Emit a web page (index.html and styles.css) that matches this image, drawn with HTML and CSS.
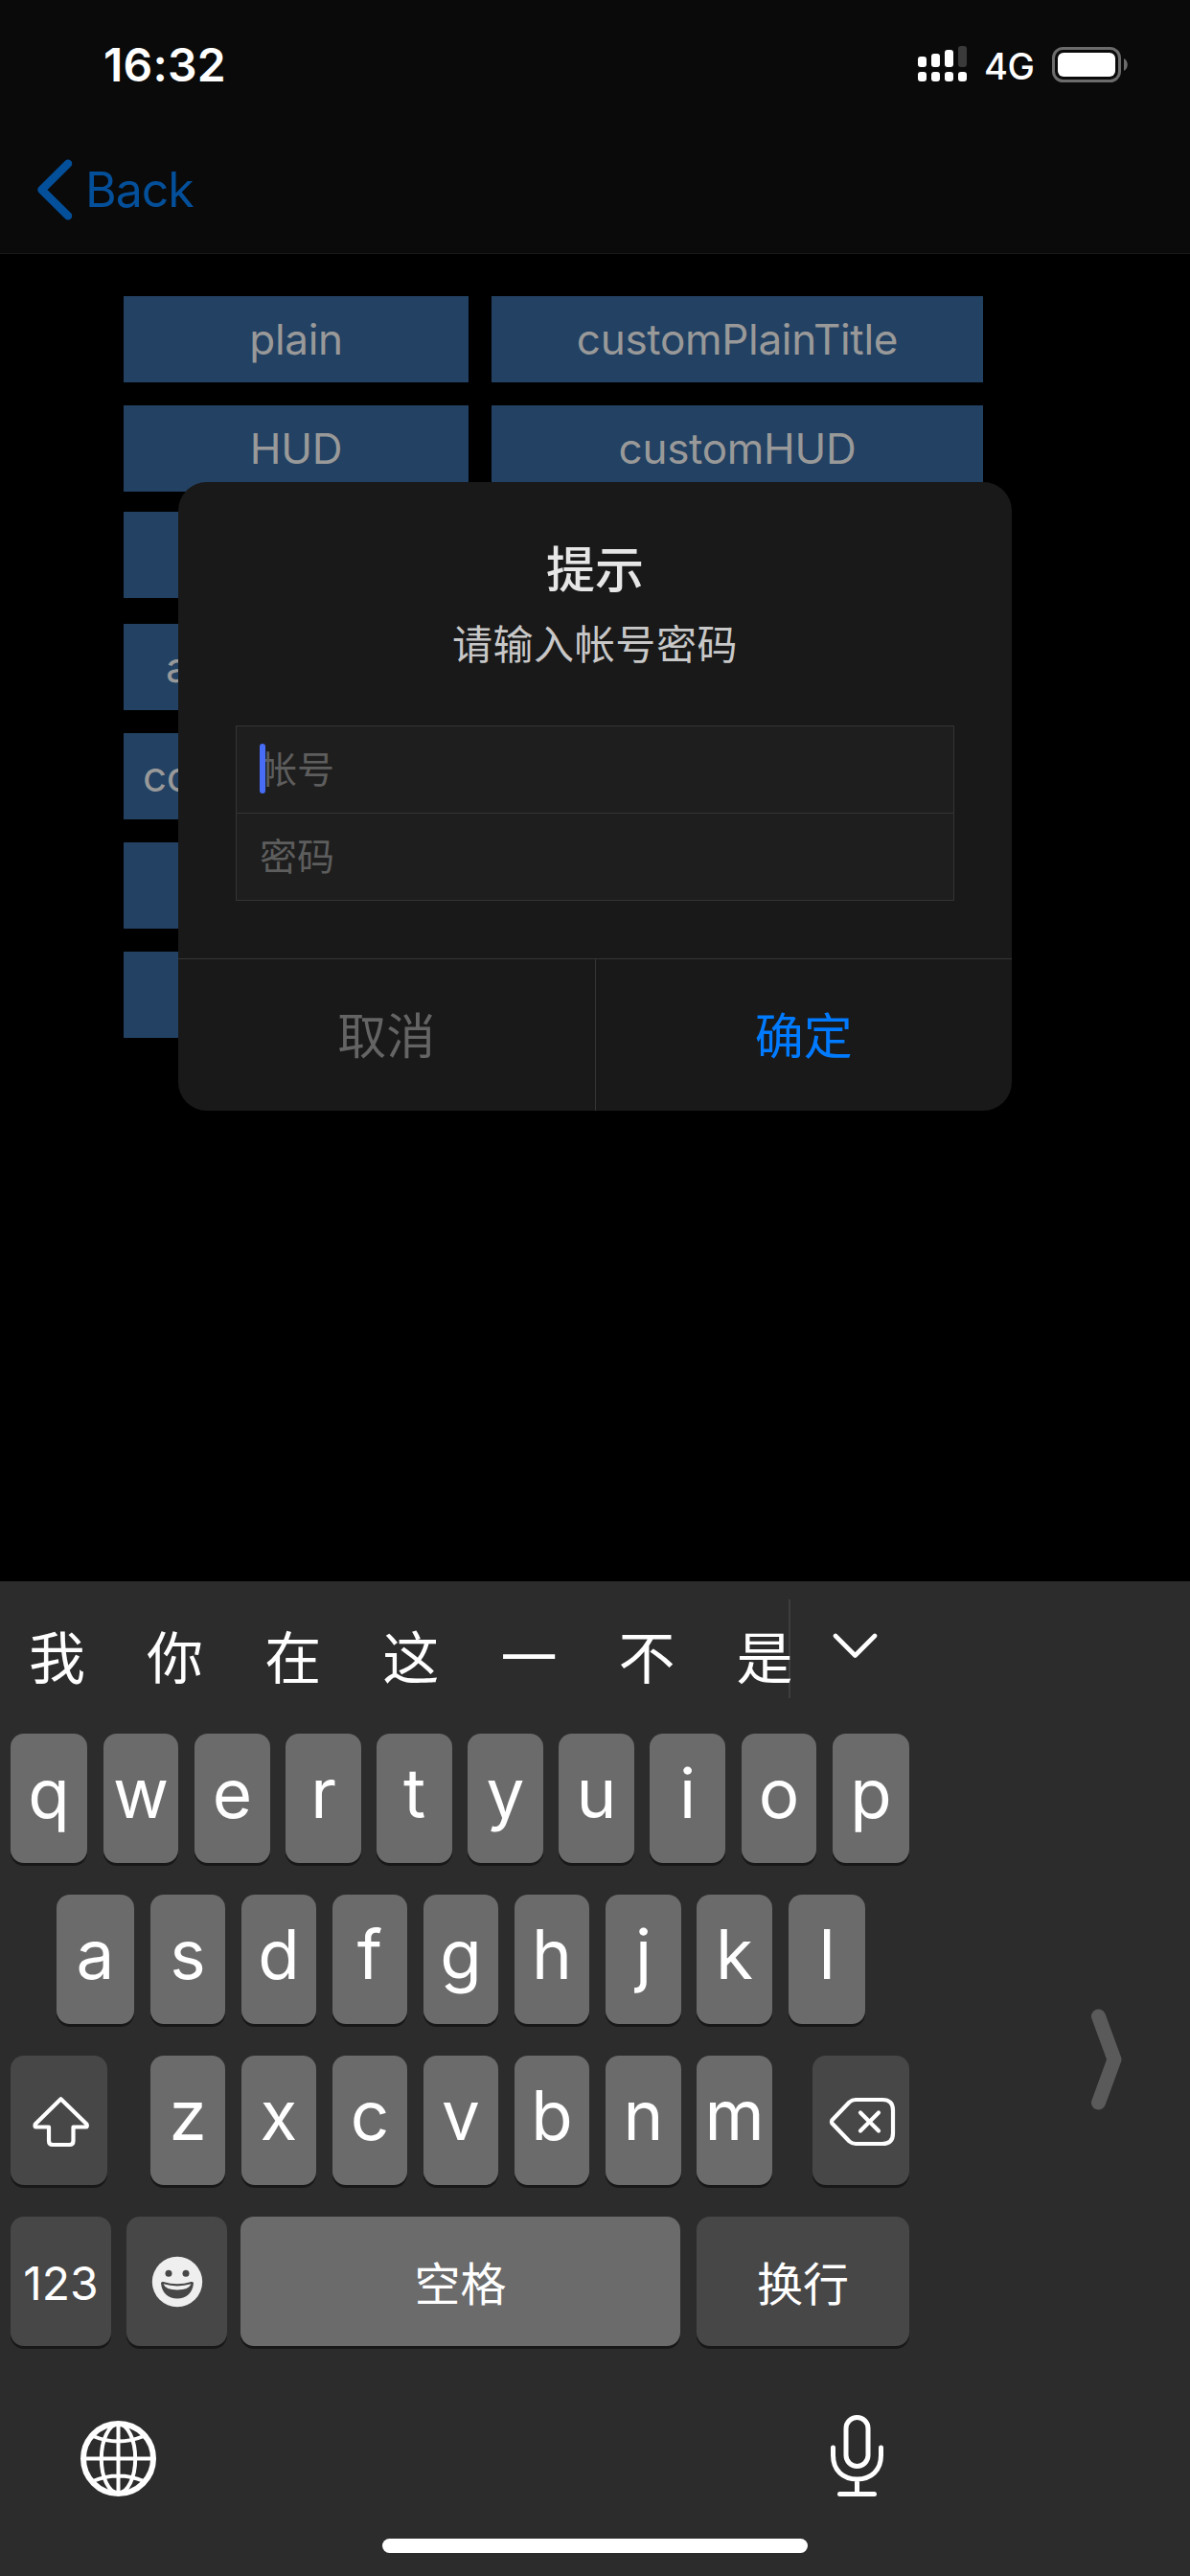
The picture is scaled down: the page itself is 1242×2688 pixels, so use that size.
FILE: index.html
```html
<!DOCTYPE html>
<html lang="zh-CN">
<head>
<meta charset="utf-8">
<title>Alert</title>
<link rel="stylesheet" href="styles.css">
</head>
<body>
<div class="screen">
  <header class="top">
    <div class="status">
      <span class="time">16:32</span>
      <div class="indicators">
        <svg class="signal" width="51" height="37" viewBox="0 0 51 37" fill="#fff">
          <rect x="0" y="11" width="9" height="11" rx="3"/><rect x="14" y="8" width="9" height="14" rx="3"/><rect x="28" y="4" width="9" height="18" rx="3"/><rect x="42" y="0" width="9" height="22" rx="3" fill="#3a3a3a"/>
          <rect x="0" y="27" width="9" height="10" rx="3"/><rect x="14" y="27" width="9" height="10" rx="3"/><rect x="28" y="27" width="9" height="10" rx="3"/><rect x="42" y="27" width="9" height="10" rx="3"/>
        </svg>
        <span class="network">4G</span>
        <svg class="battery" width="79" height="37" viewBox="0 0 79 37">
          <rect x="1.5" y="1.5" width="69" height="34" rx="10" fill="none" stroke="#6c6c6c" stroke-width="3"/>
          <rect x="6" y="6" width="60" height="25" rx="6" fill="#fff"/>
          <path d="M75 12c5 2.500 5 10.500 0 13z" fill="#6c6c6c"/>
        </svg>
      </div>
    </div>
    <nav class="nav">
      <svg width="38" height="64" viewBox="0 0 38 64" fill="none" stroke="#044f99" stroke-width="8.500" stroke-linecap="round" stroke-linejoin="round"><path d="M33 4.800 5.500 32 33 59.200"/></svg>
      <span class="back">Back</span>
    </nav>
  </header>

  <main class="content">
    <div class="row"><div class="btn">plain</div><div class="btn wide">customPlainTitle</div></div>
    <div class="row"><div class="btn">HUD</div><div class="btn wide">customHUD</div></div>
    <div class="row tight"><div class="btn"></div></div>
    <div class="row loose"><div class="btn clip-a">a</div></div>
    <div class="row"><div class="btn clip-co">co</div></div>
    <div class="row"><div class="btn"></div></div>
    <div class="row"><div class="btn"></div></div>
  </main>

  <section class="dialog">
    <h1 class="title">提示</h1>
    <p class="message">请输入帐号密码</p>
    <div class="fields">
      <div class="field">帐号<i class="caret"></i></div>
      <div class="field">密码</div>
    </div>
    <div class="actions">
      <div class="action cancel">取消</div>
      <div class="action confirm">确定</div>
    </div>
  </section>

  <section class="keyboard">
    <div class="pad">
      <div class="candidates">
        <div class="words"><span>我</span><span>你</span><span>在</span><span>这</span><span>一</span><span>不</span><span>是</span></div>
        <svg class="expand" width="48" height="28" viewBox="0 0 48 28" fill="none" stroke="#fff" stroke-width="4.600" stroke-linecap="round" stroke-linejoin="round"><path d="M3 3 23.500 23.500 44 3"/></svg>
      </div>
      <div class="keys r1">
        <div class="key edge">q</div><div class="key slim">w</div><div class="key">e</div><div class="key">r</div><div class="key">t</div><div class="key">y</div><div class="key">u</div><div class="key">i</div><div class="key slim">o</div><div class="key edge">p</div>
      </div>
      <div class="keys r2">
        <div class="key edge2">a</div><div class="key slim">s</div><div class="key slim">d</div><div class="key slim">f</div><div class="key slim">g</div><div class="key slim">h</div><div class="key">j</div><div class="key">k</div><div class="key edge">l</div>
      </div>
      <div class="keys r3">
        <div class="key dark mod">
          <svg width="60" height="54" viewBox="0 0 60 54" fill="none" stroke="#fff" stroke-width="4.200" stroke-linejoin="round"><path d="M29.500 3.200 2.800 29.500q-1 3 1 3H17V47q0 4 4 4H38.500q4 0 4-4V32.500H55.500q2 0 1-3z"/></svg>
        </div>
        <div class="key slim">z</div><div class="key slim">x</div><div class="key slim">c</div><div class="key slim">v</div><div class="key slim">b</div><div class="key">n</div><div class="key">m</div>
        <div class="key dark mod del">
          <svg width="70" height="52" viewBox="0 0 70 52" fill="none" stroke="#fff" stroke-width="4.200" stroke-linecap="round" stroke-linejoin="round"><path d="M3.300 24.500Q2.500 26 3.300 27.500L21.500 46.500Q24.500 49 28 49H56Q67 49 67 38V14Q67 3 56 3H28Q24.500 3 21.500 5.500zM33 16.500 52 35.500M52 16.500 33 35.500"/></svg>
        </div>
      </div>
      <div class="keys r4">
        <div class="key dark num">123</div>
        <div class="key dark emoji">
          <svg width="54" height="54" viewBox="0 0 54 54"><circle cx="27" cy="27" r="26.200" fill="#efefef"/><circle cx="18" cy="18.300" r="3.500" fill="#474747"/><circle cx="36" cy="18.300" r="3.500" fill="#474747"/><path d="M10 28.500Q10 26.500 12.500 27 27 31.500 41.500 27 44 26.500 44 28.500C43 39 36 44.500 27 44.500S11 39 10 28.500z" fill="#474747"/><path d="M12.500 29.300Q27 33.500 41.500 29.300 39 35.500 27 35.500T12.500 29.300z" fill="#efefef"/></svg>
        </div>
        <div class="key space">空格</div>
        <div class="key dark return">换行</div>
      </div>
      <div class="tools">
        <svg width="80" height="80" viewBox="0 0 80 80" fill="none" stroke="#fff" stroke-width="4"><circle cx="40.500" cy="39.500" r="36.500" stroke-width="6"/><ellipse cx="40.500" cy="39.500" rx="17.700" ry="36"/><path d="M40.500 3V76M4 39.500H77M14 16Q40.500 27 67 16M14 63Q40.500 52 67 63"/></svg>
        <svg width="58" height="86" viewBox="0 0 58 86" fill="none" stroke="#fff" stroke-width="5" stroke-linecap="round"><rect x="17" y="2.500" width="23" height="51" rx="11.500"/><path d="M3.500 34V42C3.500 58 14 67 28.500 67S53.500 58 53.500 42V34M28.500 67V82M10.500 82.500H46.500"/></svg>
      </div>
    </div>
    <svg class="dock" width="34" height="106" viewBox="0 0 34 106" fill="none" stroke="#5a5a5a" stroke-width="15" stroke-linecap="round" stroke-linejoin="round"><path d="M8.500 8 25 53 8.500 98"/></svg>
    <div class="home"></div>
  </section>
</div>
</body>
</html>
```
FILE: styles.css
```css
* { box-sizing: border-box; }

body {
  margin: 0;
  background: #000;
  color: #fff;
  font-family: Inter, "Noto Sans CJK SC", sans-serif;
}

svg { display: block; flex: none; }

.screen {
  position: relative;
  width: 1242px;
  height: 2688px;
  display: flex;
  flex-direction: column;
  overflow: hidden;
}

/* Status and navigation bars */
.top {
  height: 265px;
  background: #0a0a0a;
  border-bottom: 1px solid #191919;
}

.status {
  height: 132px;
  padding: 38px 65px 0 108px;
  display: flex;
  justify-content: space-between;
  align-items: flex-start;
}

.time {
  font-size: 48px;
  font-weight: 600;
  line-height: 60px;
  letter-spacing: 0.2px;
}

.indicators { display: flex; align-items: flex-start; }
.signal { margin-top: 10px; }
.network {
  width: 89px;
  padding-left: 18px;
  font-size: 38px;
  font-weight: 450;
  line-height: 62px;
  letter-spacing: -0.5px;
}
.battery { margin-top: 11px; }

.nav {
  height: 132px;
  padding-left: 38px;
  display: flex;
  align-items: center;
  gap: 13px;
  color: #044f99;
}
.back { font-size: 50px; line-height: 60px; letter-spacing: -1px; }

/* Demo buttons */
.content {
  flex: 1;
  padding: 44px 0 0 129px;
}
.row { display: flex; gap: 24px; margin-bottom: 24px; }
.row.tight { margin-top: -3px; margin-bottom: 27px; }
.btn {
  width: 360px;
  height: 90px;
  background: #234162;
  color: #999;
  font-size: 44px;
  line-height: 90px;
  text-align: center;
  letter-spacing: -0.3px;
}
.btn.wide { width: 513px; }
.btn.clip-a { text-align: left; padding-left: 44px; }
.btn.clip-co { text-align: left; padding-left: 20px; }

/* Alert */
.dialog {
  position: absolute;
  left: 186px;
  top: 503px;
  width: 870px;
  height: 656px;
  padding-top: 53px;
  display: flex;
  flex-direction: column;
  align-items: center;
  background: #191919;
  border-radius: 30px;
  overflow: hidden;
  font-family: "Noto Sans CJK SC", sans-serif;
}
.title {
  margin: 0;
  font-size: 51px;
  font-weight: 500;
  line-height: 70px;
  color: #e6e6e6;
}
.message {
  margin: 14px 0 0;
  font-size: 42px;
  line-height: 60px;
  letter-spacing: 0.6px;
  color: #c8c8c8;
}
.fields {
  width: 750px;
  margin-top: 57px;
  border: 1px solid #343434;
  background: #1e1e1e;
}
.field {
  position: relative;
  height: 90px;
  padding-left: 24px;
  font-size: 39px;
  line-height: 85px;
  color: #5d5d5d;
}
.field + .field { height: 91px; border-top: 1px solid #343434; }
.caret {
  position: absolute;
  left: 24px;
  top: 18px;
  width: 6px;
  height: 52px;
  border-radius: 3px;
  background: #476cf5;
}
.actions {
  align-self: stretch;
  margin-top: 60px;
  border-top: 1px solid #353535;
  flex: 1;
  display: flex;
}
.action {
  flex: 1;
  font-size: 51px;
  line-height: 154px;
  text-align: center;
}
.cancel { color: #646464; border-right: 1px solid #353535; }
.confirm { color: #007aff; }

/* Keyboard */
.keyboard {
  position: relative;
  height: 1038px;
  background: #2c2c2c;
}
.pad { width: 960px; padding-left: 11px; }

.candidates {
  height: 159px;
  display: flex;
  align-items: flex-start;
}
.words {
  width: 814px;
  height: 103px;
  margin-top: 19px;
  padding-left: 19px;
  display: flex;
  border-right: 2px solid #3e3e3e;
  font-family: "Noto Sans CJK SC", sans-serif;
  font-size: 59px;
  line-height: 116px;
}
.words span { flex: none; width: 123.1px; }
.words span:last-child { width: auto; }
.expand { margin: 54px 0 0 44px; }

.keys { display: grid; height: 168px; }
.r1 { grid-template-columns: 97px 95px 95px 95px 95px 95px 95px 96px 95px 80px; }
.r2 { grid-template-columns: 98px 95px 95px 95px 95px 95px 95px 96px 80px; padding-left: 48px; }
.r3 { grid-template-columns: 146px 95px 95px 95px 95px 95px 95px 121px 101px; }
.r4 { grid-template-columns: 121px 119px 476px 222px; }

.key {
  width: 79px;
  height: 135px;
  border-radius: 14px;
  background: #6b6b6b;
  box-shadow: 0 3px 0 #181818;
  font-size: 71px;
  font-weight: 400;
  line-height: 125px;
  text-align: center;
}
.slim { width: 78px; }
.edge { width: 80px; }
.edge2 { width: 81px; }
.dark { background: #474747; }
.mod, .emoji { display: flex; justify-content: center; align-items: center; }
.mod { width: 101px; padding: 3px 0 0 4px; }
.del { padding: 2px 0 0 3px; }
.num { width: 105px; font-size: 48px; font-weight: 400; line-height: 140px; }
.emoji { width: 105px; }
.space, .return {
  font-family: "Noto Sans CJK SC", sans-serif;
  font-size: 48px;
  font-weight: 400;
  line-height: 135px;
}
.space { width: 459px; }
.return { width: 222px; }

.tools {
  height: 86px;
  margin-top: 39px;
  padding: 0 36px 0 72px;
  display: flex;
  justify-content: space-between;
  align-items: flex-end;
}

.dock { position: absolute; left: 1138px; top: 446px; }

.home {
  position: absolute;
  left: 399px;
  bottom: 24px;
  width: 444px;
  height: 15px;
  border-radius: 8px;
  background: #fff;
}
```
